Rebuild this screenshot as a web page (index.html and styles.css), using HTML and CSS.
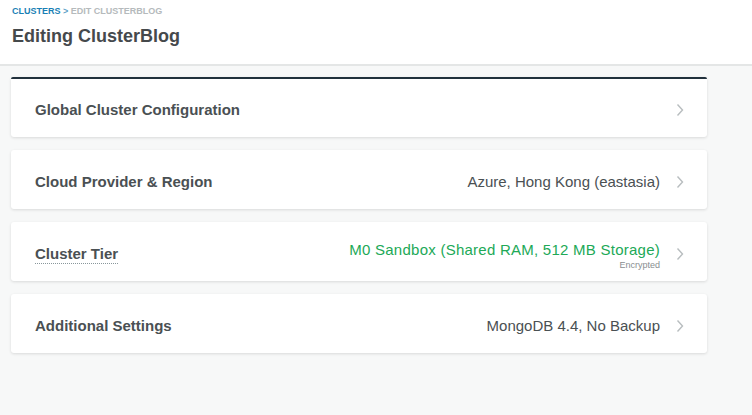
FILE: index.html
```html
<!DOCTYPE html>
<html>
<head>
<meta charset="utf-8">
<link rel="stylesheet" href="styles.css">
</head>
<body>
<header class="page-header">
  <nav class="breadcrumb"><a class="crumb-link">Clusters</a> <span class="crumb-sep">&gt;</span> <span class="crumb-current">Edit ClusterBlog</span></nav>
  <h1 class="title">Editing ClusterBlog</h1>
</header>
<main class="content">
  <section class="card card-active">
    <div class="card-label">Global Cluster Configuration</div>
    <div class="card-right"><svg class="chev" viewBox="0 0 8 14"><polyline points="1.5,1.5 6.5,7 1.5,12.5"/></svg></div>
  </section>
  <section class="card">
    <div class="card-label">Cloud Provider &amp; Region</div>
    <div class="card-right"><div class="value">Azure, Hong Kong (eastasia)</div><svg class="chev" viewBox="0 0 8 14"><polyline points="1.5,1.5 6.5,7 1.5,12.5"/></svg></div>
  </section>
  <section class="card">
    <div class="card-label"><span class="dotted">Cluster Tier</span></div>
    <div class="card-right">
      <div class="value-stack">
        <div class="value green">M0 Sandbox (Shared RAM, 512 MB Storage)</div>
        <div class="sub">Encrypted</div>
      </div>
      <svg class="chev" viewBox="0 0 8 14"><polyline points="1.5,1.5 6.5,7 1.5,12.5"/></svg>
    </div>
  </section>
  <section class="card">
    <div class="card-label">Additional Settings</div>
    <div class="card-right"><div class="value">MongoDB 4.4, No Backup</div><svg class="chev" viewBox="0 0 8 14"><polyline points="1.5,1.5 6.5,7 1.5,12.5"/></svg></div>
  </section>
</main>
</body>
</html>
```
FILE: styles.css
```css
html, body { margin: 0; padding: 0; }
body {
  background: #f7f8f8;
  font-family: "Liberation Sans", Arial, sans-serif;
  color: #3d4f58;
  width: 752px;
  height: 415px;
  overflow: hidden;
}
.page-header {
  background: #fff;
  height: 66px;
  padding: 6px 12px 0;
  box-sizing: border-box;
  border-bottom: 2px solid #e4e6e6;
}
.breadcrumb {
  font-size: 9px;
  font-weight: bold;
  text-transform: uppercase;
  line-height: 11px;
  color: #b5babc;
}
.crumb-link { color: #1a7fb5; }
.crumb-sep { color: #5e9fc7; }
.title {
  margin: 8px 0 0;
  font-size: 18px;
  line-height: 22px;
  font-weight: bold;
  color: #45494c;
}
.content {
  padding: 11px 45px 0 11px;
  display: flex;
  flex-direction: column;
  gap: 13px;
}
.card {
  background: #fff;
  height: 59px;
  box-sizing: border-box;
  border-radius: 3px;
  box-shadow: 0 1px 3px rgba(0,0,0,0.12);
  display: flex;
  align-items: center;
  justify-content: space-between;
  padding: 3px 23px 0 24px;
}
.card-active {
  border-top: 2px solid #21313c;
  border-radius: 2px 2px 3px 3px;
  height: 60px;
  padding-top: 3px;
}
.card-label {
  font-size: 15px;
  font-weight: bold;
  color: #4a5053;
}
.dotted {
  border-bottom: 1px dotted #89979b;
  padding-bottom: 1px;
}
.card-right {
  display: flex;
  align-items: center;
  gap: 16px;
}
.value {
  font-size: 15px;
  color: #4a5053;
}
.green { color: #21a957; letter-spacing: 0.25px; }
.value-stack {
  display: flex;
  flex-direction: column;
  align-items: flex-end;
  margin-top: 4px;
}
.sub {
  font-size: 9px;
  color: #888e90;
  margin-top: 2px;
  letter-spacing: 0;
}
.chev {
  width: 8px;
  height: 14px;
  fill: none;
  stroke: #b8bdbf;
  stroke-width: 1.4;
  margin-top: 1px;
}
```
